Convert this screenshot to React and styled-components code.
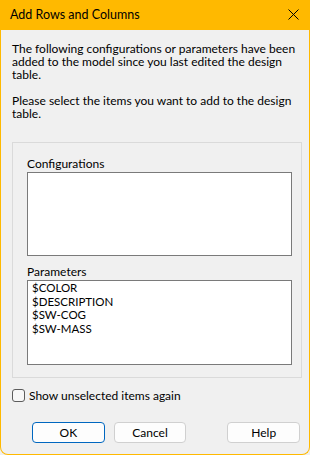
import React from 'react';
import styled, { createGlobalStyle } from 'styled-components';

const GlobalStyle = createGlobalStyle`
  html, body {
    margin: 0;
    padding: 0;
    background: #f0f0f0;
  }
  * {
    box-sizing: border-box;
  }
`;

const Window = styled.div`
  width: 310px;
  height: 455px;
  display: flex;
  flex-direction: column;
  background: #f0f0f0;
  border: 1px solid #ffb900;
  border-top: none;
  border-radius: 0 0 8px 8px;
  font-family: Lato, "Noto Sans", sans-serif;
  font-size: 12px;
  color: #000;
  overflow: hidden;
`;

const TitleBar = styled.div`
  height: 30px;
  flex: none;
  background: #ffb900;
  display: flex;
  align-items: center;
  justify-content: space-between;
  padding: 0 9px 0 10px;
  margin: 0 -1px;
`;

const Title = styled.span`
  font-size: 12.5px;
  line-height: 16px;
  margin-top: -1px;
`;

const CloseButton = styled.button`
  width: 16px;
  height: 16px;
  padding: 0;
  border: none;
  background: transparent;
  display: flex;
  align-items: center;
  justify-content: center;
  margin-top: -1px;
`;

const Body = styled.div`
  flex: 1;
  display: flex;
  flex-direction: column;
  padding: 12px 7px 0 11px;
`;

const Message = styled.p`
  margin: 0 0 13px;
  line-height: 13px;
  &:last-of-type {
    margin-bottom: 0;
  }
`;

const Group = styled.div`
  margin-top: 22px;
  border: 1px solid #dadada;
  padding: 14px 9px 12px 14px;
  display: flex;
  flex-direction: column;
`;

const FieldLabel = styled.div`
  line-height: 13px;
  margin-bottom: 2px;
  margin-top: ${p => p.$gap || 0}px;
`;

const ListBox = styled.ul`
  list-style: none;
  margin: 0;
  height: ${p => p.$height}px;
  background: #fff;
  border: 1px solid #7a7a7a;
  padding: 0 4px;
`;

const ListItem = styled.li`
  line-height: 13.5px;
  font-size: 11.5px;
`;

const CheckRow = styled.label`
  display: flex;
  align-items: center;
  gap: 4px;
  margin-top: 11px;
  line-height: 13px;
`;

const Box = styled.span`
  width: 13px;
  height: 13px;
  border: 1px solid #5c5c5c;
  border-radius: 3px;
  background: #f7f7f7;
  flex: none;
`;

const ButtonRow = styled.div`
  display: flex;
  margin-top: auto;
  margin-bottom: 11px;
  padding-left: 20px;
  padding-right: 2px;
`;

const Button = styled.button`
  width: 73px;
  height: 21px;
  padding: 0;
  font-family: inherit;
  font-size: 12px;
  color: #000;
  background: #fdfdfd;
  border: 1px solid ${p => (p.$primary ? '#0067c0' : '#d0d0d0')};
  border-radius: 4px;
  margin-left: ${p => p.$gap || 0}px;
`;

const parameters = ['$COLOR', '$DESCRIPTION', '$SW-COG', '$SW-MASS'];

export default function App() {
  return (
    <>
      <GlobalStyle />
      <Window>
        <TitleBar>
          <Title>Add Rows and Columns</Title>
          <CloseButton aria-label="Close">
            <svg width="11" height="11" viewBox="0 0 11 11">
              <path d="M0.5 0.5 L10.5 10.5 M10.5 0.5 L0.5 10.5" stroke="#000" strokeWidth="1" fill="none" />
            </svg>
          </CloseButton>
        </TitleBar>
        <Body>
          <Message>
            The following configurations or parameters have been added to the model since you last edited the design table.
          </Message>
          <Message>Please select the items you want to add to the design table.</Message>
          <Group>
            <FieldLabel>Configurations</FieldLabel>
            <ListBox $height={84} />
            <FieldLabel $gap={9}>Parameters</FieldLabel>
            <ListBox $height={85}>
              {parameters.map(p => (
                <ListItem key={p}>{p}</ListItem>
              ))}
            </ListBox>
          </Group>
          <CheckRow>
            <Box />
            Show unselected items again
          </CheckRow>
          <ButtonRow>
            <Button $primary>OK</Button>
            <Button $gap={9}>Cancel</Button>
            <Button $gap={41}>Help</Button>
          </ButtonRow>
        </Body>
      </Window>
    </>
  );
}
